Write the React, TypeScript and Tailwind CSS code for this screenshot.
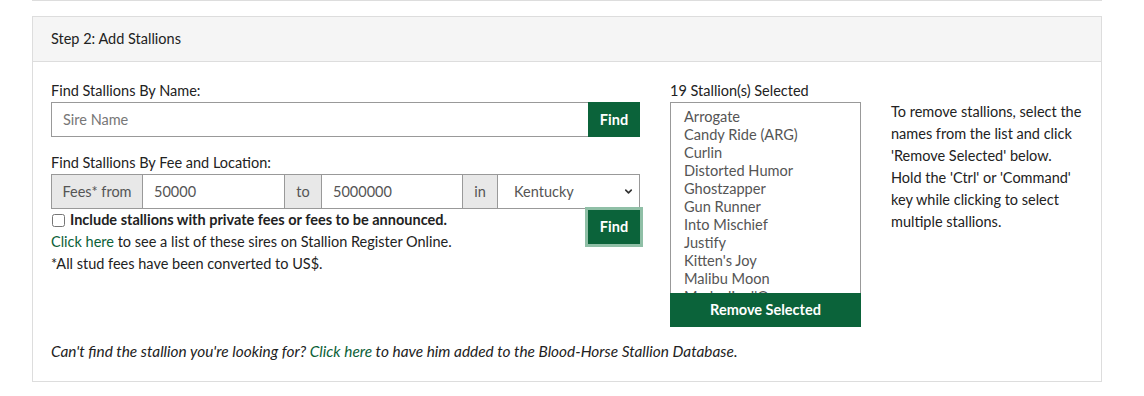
import { ChevronDown } from "lucide-react";

const STALLIONS = [
  "Arrogate",
  "Candy Ride (ARG)",
  "Curlin",
  "Distorted Humor",
  "Ghostzapper",
  "Gun Runner",
  "Into Mischief",
  "Justify",
  "Kitten's Joy",
  "Malibu Moon",
  "Medaglia d'Oro",
];

export default function App() {
  return (
    <div
      className="w-[1144px] h-[396px] bg-white text-[14.5px] text-[#222]"
      style={{ fontFamily: "Lato, 'Noto Sans', sans-serif" }}
    >
      <div className="ml-[32px] w-[1070px] h-px bg-[#ddd]" />
      <div className="ml-[32px] mt-[15px] w-[1070px] border border-[#ddd]">
        <div className="h-[45px] bg-[#f5f5f5] border-b border-[#ddd] px-[18px] flex items-center">
          Step 2: Add Stallions
        </div>

        <div className="px-[18px] pt-[19px] pb-[20px]">
          <div className="flex">
            {/* left column */}
            <div className="w-[589px] shrink-0">
              <div className="leading-[20px] mb-[1px]">Find Stallions By Name:</div>
              <div className="flex h-[35px]">
                <div className="flex-1 border border-[#999] border-r-0 flex items-center px-[11px] text-[#777]">
                  Sire Name
                </div>
                <button className="w-[52px] bg-[#0b633a] text-white font-bold">Find</button>
              </div>

              <div className="leading-[20px] mt-[16px] mb-[1px]">
                Find Stallions By Fee and Location:
              </div>
              <div className="flex h-[35px] border border-[#999] text-[#555]">
                <div className="w-[91px] bg-[#e8e8e8] border-r border-[#999] flex items-center justify-center">
                  Fees* from
                </div>
                <div className="w-[142px] border-r border-[#999] flex items-center px-[11px]">
                  50000
                </div>
                <div className="w-[37px] bg-[#e8e8e8] border-r border-[#999] flex items-center justify-center">
                  to
                </div>
                <div className="w-[141px] border-r border-[#999] flex items-center px-[11px]">
                  5000000
                </div>
                <div className="w-[35px] bg-[#e8e8e8] border-r border-[#999] flex items-center justify-center">
                  in
                </div>
                <div className="flex-1 flex items-center justify-between pl-[16px] pr-[5px]">
                  <span>Kentucky</span>
                  <ChevronDown size={11} strokeWidth={3.5} className="text-[#333]" />
                </div>
              </div>
              <div className="flex">
                <div className="flex-1">
                  <label className="flex items-center h-[22px] font-bold">
                    <input type="checkbox" className="w-[13px] h-[13px] ml-[1px] mr-[5px]" />
                    Include stallions with private fees or fees to be announced.
                  </label>
                  <div className="leading-[22px]">
                    <a className="text-[#0b6138]">Click here</a> to see a list of these sires on
                    Stallion Register Online.
                  </div>
                  <div className="leading-[22px]">*All stud fees have been converted to US$.</div>
                </div>
                <button className="w-[52px] h-[34px] mt-[1px] bg-[#0b633a] text-white font-bold outline-[3px] outline-solid outline-[#8fbfa6]">
                  Find
                </button>
              </div>
            </div>

            {/* middle column */}
            <div className="w-[191px] shrink-0 ml-[30px]">
              <div className="leading-[20px] mb-[1px]">19 Stallion(s) Selected</div>
              <div className="h-[191px] border border-[#999] border-b-0 overflow-hidden pt-[5px] pl-[13px] text-[#555]">
                {STALLIONS.map((s) => (
                  <div key={s} className="leading-[18px] text-[14.6px] whitespace-nowrap">
                    {s}
                  </div>
                ))}
              </div>
              <button className="w-full h-[34px] bg-[#0b633a] text-white font-bold">
                Remove Selected
              </button>
            </div>

            {/* help text */}
            <div className="ml-[30px] w-[200px] pt-[20px] leading-[22px]">
              To remove stallions, select the names from the list and click 'Remove Selected'
              below. Hold the 'Ctrl' or 'Command' key while clicking to select multiple stallions.
            </div>
          </div>

          <div className="italic mt-[14px] leading-[20px] text-[15.4px]">
            Can't find the stallion you're looking for?{" "}
            <a className="text-[#0b6138]">Click here</a> to have him added to the Blood-Horse
            Stallion Database.
          </div>
        </div>
      </div>
    </div>
  );
}
